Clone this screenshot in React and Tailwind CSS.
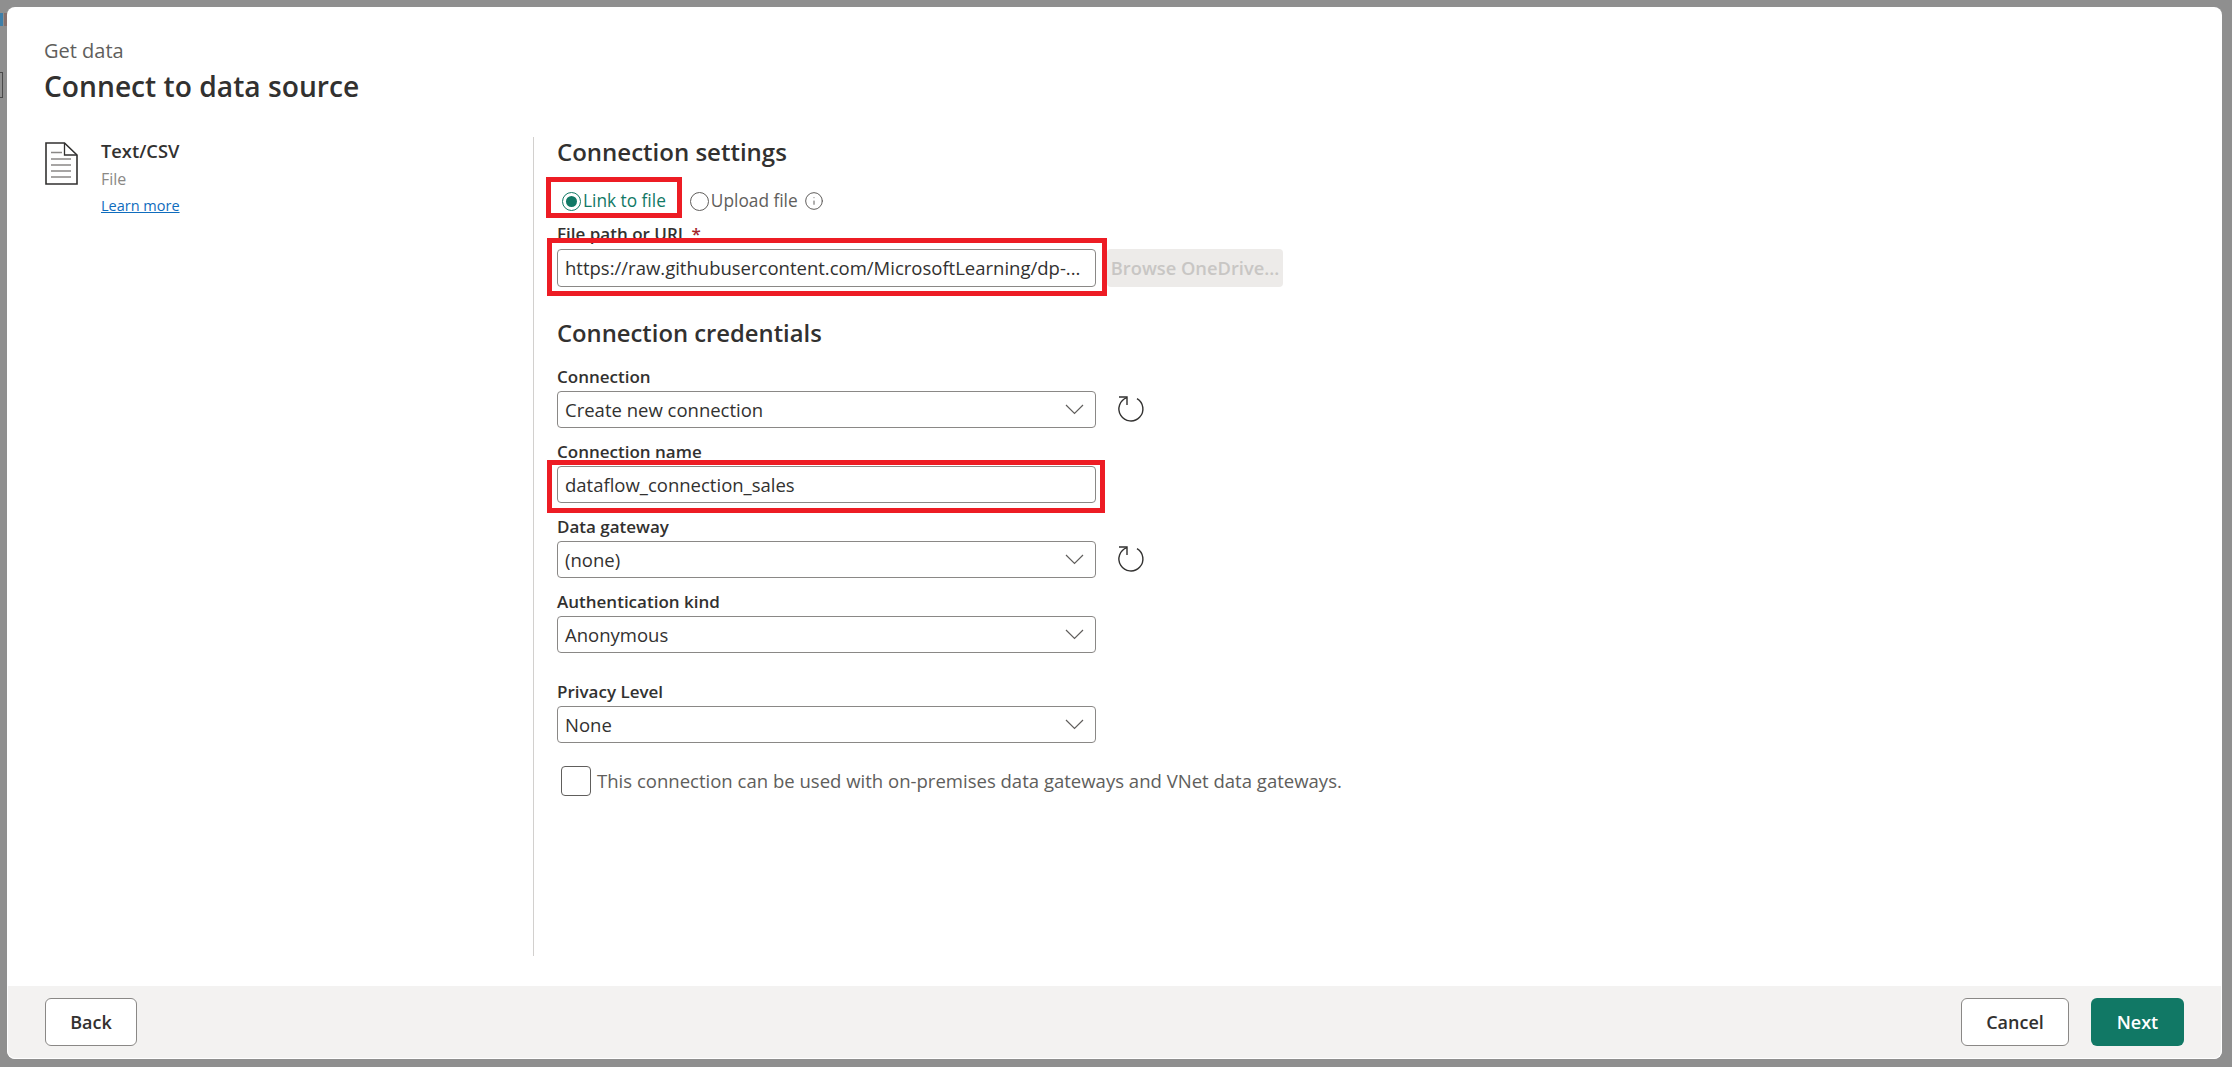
import { Info } from "lucide-react";

const font = { fontFamily: '"Open Sans", "Noto Sans", sans-serif' };

function RefreshIcon() {
  return (
    <svg width="30" height="30" viewBox="0 0 30 30" fill="none" stroke="#323130" strokeWidth="1.4" className="-mt-[2px] ml-[20px] flex-shrink-0">
      <path d="M11 3.6 A12 12 0 1 0 21 4.6" />
      <path d="M3 3 H11 V11" />
    </svg>
  );
}

function Chevron() {
  return (
    <svg width="19" height="11" viewBox="0 0 19 11" fill="none" stroke="#605e5c" strokeWidth="1.2" className="flex-shrink-0">
      <path d="M1 1 L9.5 9.5 L18 1" />
    </svg>
  );
}

function FileIcon() {
  return (
    <svg width="33" height="43" viewBox="0 0 33 43" fill="none" className="mt-[3px] flex-shrink-0">
      <path d="M1 1 H19.5 L32 13 V42 H1 Z" fill="#fff" stroke="#323130" strokeWidth="1.6" />
      <path d="M19.5 1 V13 H32" stroke="#323130" strokeWidth="1.3" />
      <path d="M6 10.5 H17 M6 17 H26 M6 23 H26 M6 29 H26 M6 35 H26" stroke="#8a8886" strokeWidth="1.5" />
    </svg>
  );
}

function Label({ children, className = "" }) {
  return <div className={`h-[22px] text-[17px] leading-[22px] font-semibold text-[#323130] ${className}`}>{children}</div>;
}

function TextBox({ value, className = "h-[37px]" }) {
  return (
    <div className={`flex w-[539px] items-center rounded border border-[#8a8886] bg-white pl-[7px] pr-2 text-[18.5px] text-[#323130] whitespace-nowrap overflow-hidden ${className}`}>
      {value}
    </div>
  );
}

function SelectBox({ value }) {
  return (
    <div className="flex h-[37px] w-[539px] items-center justify-between rounded border border-[#8a8886] bg-white pl-[7px] pr-[11px] text-[18.5px] text-[#323130]">
      <span>{value}</span>
      <Chevron />
    </div>
  );
}

export default function App() {
  return (
    <div style={font} className="relative h-[1067px] w-[2232px] overflow-hidden bg-[#8f8f8f] pl-[7px] pt-[7px]">
      {/* Bits of the page behind the dialog */}
      <div className="absolute left-0 top-[13px] h-[13px] w-[3px] bg-[#3f7fa8]" />
      <div className="absolute left-[4px] top-[13px] h-[13px] w-[3px] bg-[#86706c]" />
      <div className="absolute left-0 top-[72px] h-[26px] w-[3px] border-y border-r border-[#4a4a4a]" />

      <div className="relative flex h-[1052px] w-[2215px] flex-col overflow-hidden rounded-lg bg-white">
        {/* Header */}
        <div className="h-[130px] flex-shrink-0 pl-[37px] pt-[32px]">
          <div className="text-[20px] leading-[24px] text-[#605e5c]">Get data</div>
          <div className="mt-[5px] text-[28.2px] leading-[36px] font-semibold text-[#323130]">Connect to data source</div>
        </div>

        {/* Body */}
        <div className="flex min-h-0 flex-1">
          <div className="flex h-[819px] w-[527px] flex-shrink-0 border-r border-[#d2d0ce] pl-[38px] pt-[2px]">
            <FileIcon />
            <div className="ml-[23px]">
              <div className="text-[18.3px] leading-[24px] font-semibold text-[#323130]">Text/CSV</div>
              <div className="mt-[4px] text-[16px] leading-[24px] text-[#8a8886]">File</div>
              <a className="mt-[4px] block text-[14.5px] leading-[22px] text-[#0f6cbd] underline">Learn more</a>
            </div>
          </div>

          <div className="pl-[23px]">
            <div className="-mt-[1px] text-[24px] leading-[32px] font-semibold text-[#323130]">Connection settings</div>

            <div className="mt-[21px] flex h-[24px] items-center text-[17.3px]">
              <span className="ml-[5px] flex h-[19px] w-[19px] items-center justify-center rounded-full border border-[#117865]">
                <span className="h-[11px] w-[11px] rounded-full bg-[#117865]" />
              </span>
              <span className="ml-[2px] text-[#117865]">Link to file</span>
              <span className="ml-[24px] h-[19px] w-[19px] rounded-full border border-[#605e5c]" />
              <span className="ml-[2px] text-[#605e5c]">Upload file</span>
              <Info className="ml-[6px] h-[20px] w-[20px] text-[#605e5c]" strokeWidth={1.2} />
            </div>

            <Label className="mt-[10px]">
              File path or URL <span className="text-[#a4262c]">*</span>
            </Label>
            <div className="mt-[4px] flex items-center">
              <TextBox value="https://raw.githubusercontent.com/MicrosoftLearning/dp-..." className="h-[38px]" />
              <div className="ml-[11px] flex h-[38px] w-[176px] items-center justify-center rounded bg-[#edebe9] text-[18.3px] font-semibold whitespace-nowrap text-[#c8c6c4]">
                Browse OneDrive...
              </div>
            </div>

            <div className="mt-[30px] text-[23.8px] leading-[32px] font-semibold text-[#323130]">Connection credentials</div>

            <Label className="mt-[17px]">Connection</Label>
            <div className="mt-[3px] flex items-center">
              <SelectBox value="Create new connection" />
              <RefreshIcon />
            </div>

            <Label className="mt-[13px]">Connection name</Label>
            <div className="mt-[3px]">
              <TextBox value="dataflow_connection_sales" />
            </div>

            <Label className="mt-[13px]">Data gateway</Label>
            <div className="mt-[3px] flex items-center">
              <SelectBox value="(none)" />
              <RefreshIcon />
            </div>

            <Label className="mt-[13px]">Authentication kind</Label>
            <div className="mt-[3px]">
              <SelectBox value="Anonymous" />
            </div>

            <Label className="mt-[28px]">Privacy Level</Label>
            <div className="mt-[3px]">
              <SelectBox value="None" />
            </div>

            <div className="mt-[23px] flex items-center pl-[4px]">
              <span className="h-[30px] w-[30px] rounded border border-[#605e5c]" />
              <span className="ml-[6px] text-[18.55px] whitespace-nowrap text-[#605e5c]">
                This connection can be used with on-premises data gateways and VNet data gateways.
              </span>
            </div>
          </div>
        </div>

        {/* Footer */}
        <div className="flex h-[73px] flex-shrink-0 items-start justify-between rounded-b-lg border-x border-b border-white bg-[#f3f2f1] px-[37px] pt-[12px]">
          <button className="h-[48px] w-[92px] rounded-md border border-[#8a8886] bg-white text-[18px] font-semibold text-[#323130]">Back</button>
          <div className="flex gap-[22px]">
            <button className="h-[48px] w-[108px] rounded-md border border-[#8a8886] bg-white text-[18px] font-semibold text-[#323130]">Cancel</button>
            <button className="h-[48px] w-[93px] rounded-md bg-[#117865] text-[18px] font-semibold text-white">Next</button>
          </div>
        </div>

        {/* Red annotation boxes */}
        <div className="absolute left-[539px] top-[170px] h-[41px] w-[136px] border-[5px] border-[#ed1c24]" />
        <div className="absolute left-[540px] top-[231px] h-[58px] w-[560px] border-[5px] border-[#ed1c24]" />
        <div className="absolute left-[540px] top-[453px] h-[53px] w-[558px] border-[5px] border-[#ed1c24]" />
      </div>
    </div>
  );
}
